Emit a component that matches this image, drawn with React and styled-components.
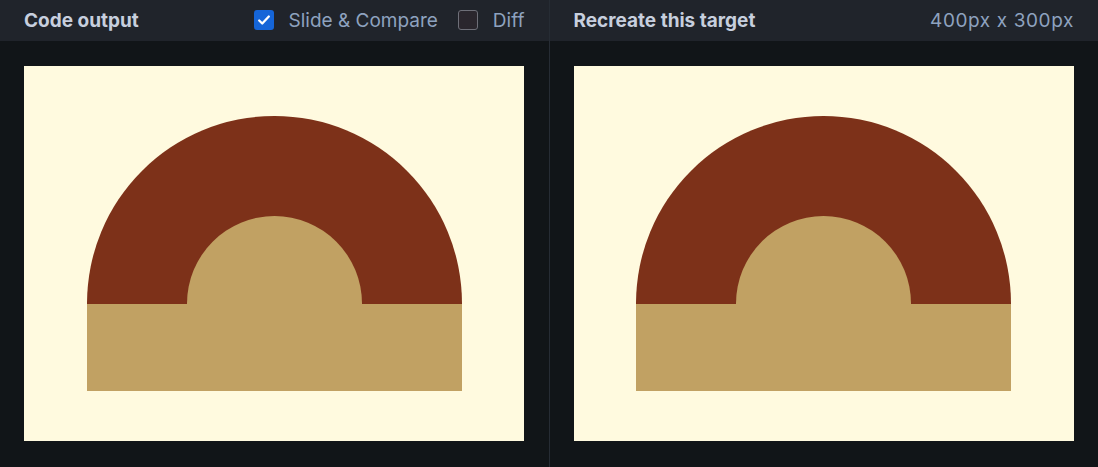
import styled, { createGlobalStyle } from "styled-components";

const Global = createGlobalStyle`
    html, body {
        margin: 0;
        padding: 0;
        background: #111518;
        font-family: Inter, "Liberation Sans", sans-serif;
    }
`

const Page = styled.div`
    display: flex;
    width: 1098px;
    height: 467px;
    background: #111518;
`

const Panel = styled.div`
    flex: 1;
    display: flex;
    flex-direction: column;
    border-left: ${props => props.divided ? "1px solid #262c34" : "none"};
`

const Header = styled.div`
    height: 41px;
    box-sizing: border-box;
    background: #20242b;
    display: flex;
    align-items: center;
    padding: 0 24px 1px;
    gap: 20px;
`

const Title = styled.div`
    font-weight: 700;
    font-size: 19px;
    color: #c7cfde;
    letter-spacing: 0;
    margin-right: auto;
`

const Label = styled.label`
    display: flex;
    align-items: center;
    gap: 15px;
    font-size: 19px;
    color: #8ea2bf;
`

const Box = styled.span`
    width: 20px;
    height: 20px;
    box-sizing: border-box;
    border-radius: 3px;
    display: flex;
    align-items: center;
    justify-content: center;
    background: ${props => props.checked ? "#1565d8" : "#2a262d"};
    border: ${props => props.checked ? "none" : "1px solid #6e6f78"};
`

const Size = styled.div`
    font-size: 19px;
    color: #8ea2bf;
    letter-spacing: 0.6px;
`

const Body = styled.div`
    padding: 25px 24px 0;
`

const Canvas = styled.div`
    position: relative;
    width: 500px;
    height: 375px;
    background: #fffadf;
    overflow: hidden;
`

const Arch = styled.div`
    position: absolute;
    left: ${props => 250 - props.r}px;
    top: ${props => 237.5 - props.r}px;
    width: ${props => props.r * 2}px;
    height: ${props => props.r}px;
    border-radius: ${props => props.r}px ${props => props.r}px 0 0;
    background: ${props => props.color};
`

const Base = styled.div`
    position: absolute;
    left: 62.5px;
    top: 237.5px;
    width: 375px;
    height: 87.5px;
    background: #c1a163;
`

const Check = () => (
    <svg width="14" height="14" viewBox="0 0 16 16">
        <path d="M2.5 8.5l3.5 3.5 7.5-8" fill="none" stroke="#fff" strokeWidth="2.6" strokeLinecap="round" strokeLinejoin="round" />
    </svg>
)

const Toggle = ({ checked, children }) => (
    <Label>
        <Box checked={checked}>{checked ? <Check /> : null}</Box>
        {children}
    </Label>
)

const Target = () => (
    <Canvas>
        <Arch r={187.5} color="#7d3119" />
        <Arch r={87.5} color="#c1a163" />
        <Base />
    </Canvas>
)

export default function App() {
    return (
        <>
            <Global />
            <Page>
                <Panel>
                    <Header>
                        <Title>Code output</Title>
                        <Toggle checked>Slide &amp; Compare</Toggle>
                        <Toggle>Diff</Toggle>
                    </Header>
                    <Body>
                        <Target />
                    </Body>
                </Panel>
                <Panel divided>
                    <Header>
                        <Title>Recreate this target</Title>
                        <Size>400px x 300px</Size>
                    </Header>
                    <Body>
                        <Target />
                    </Body>
                </Panel>
            </Page>
        </>
    )
}
